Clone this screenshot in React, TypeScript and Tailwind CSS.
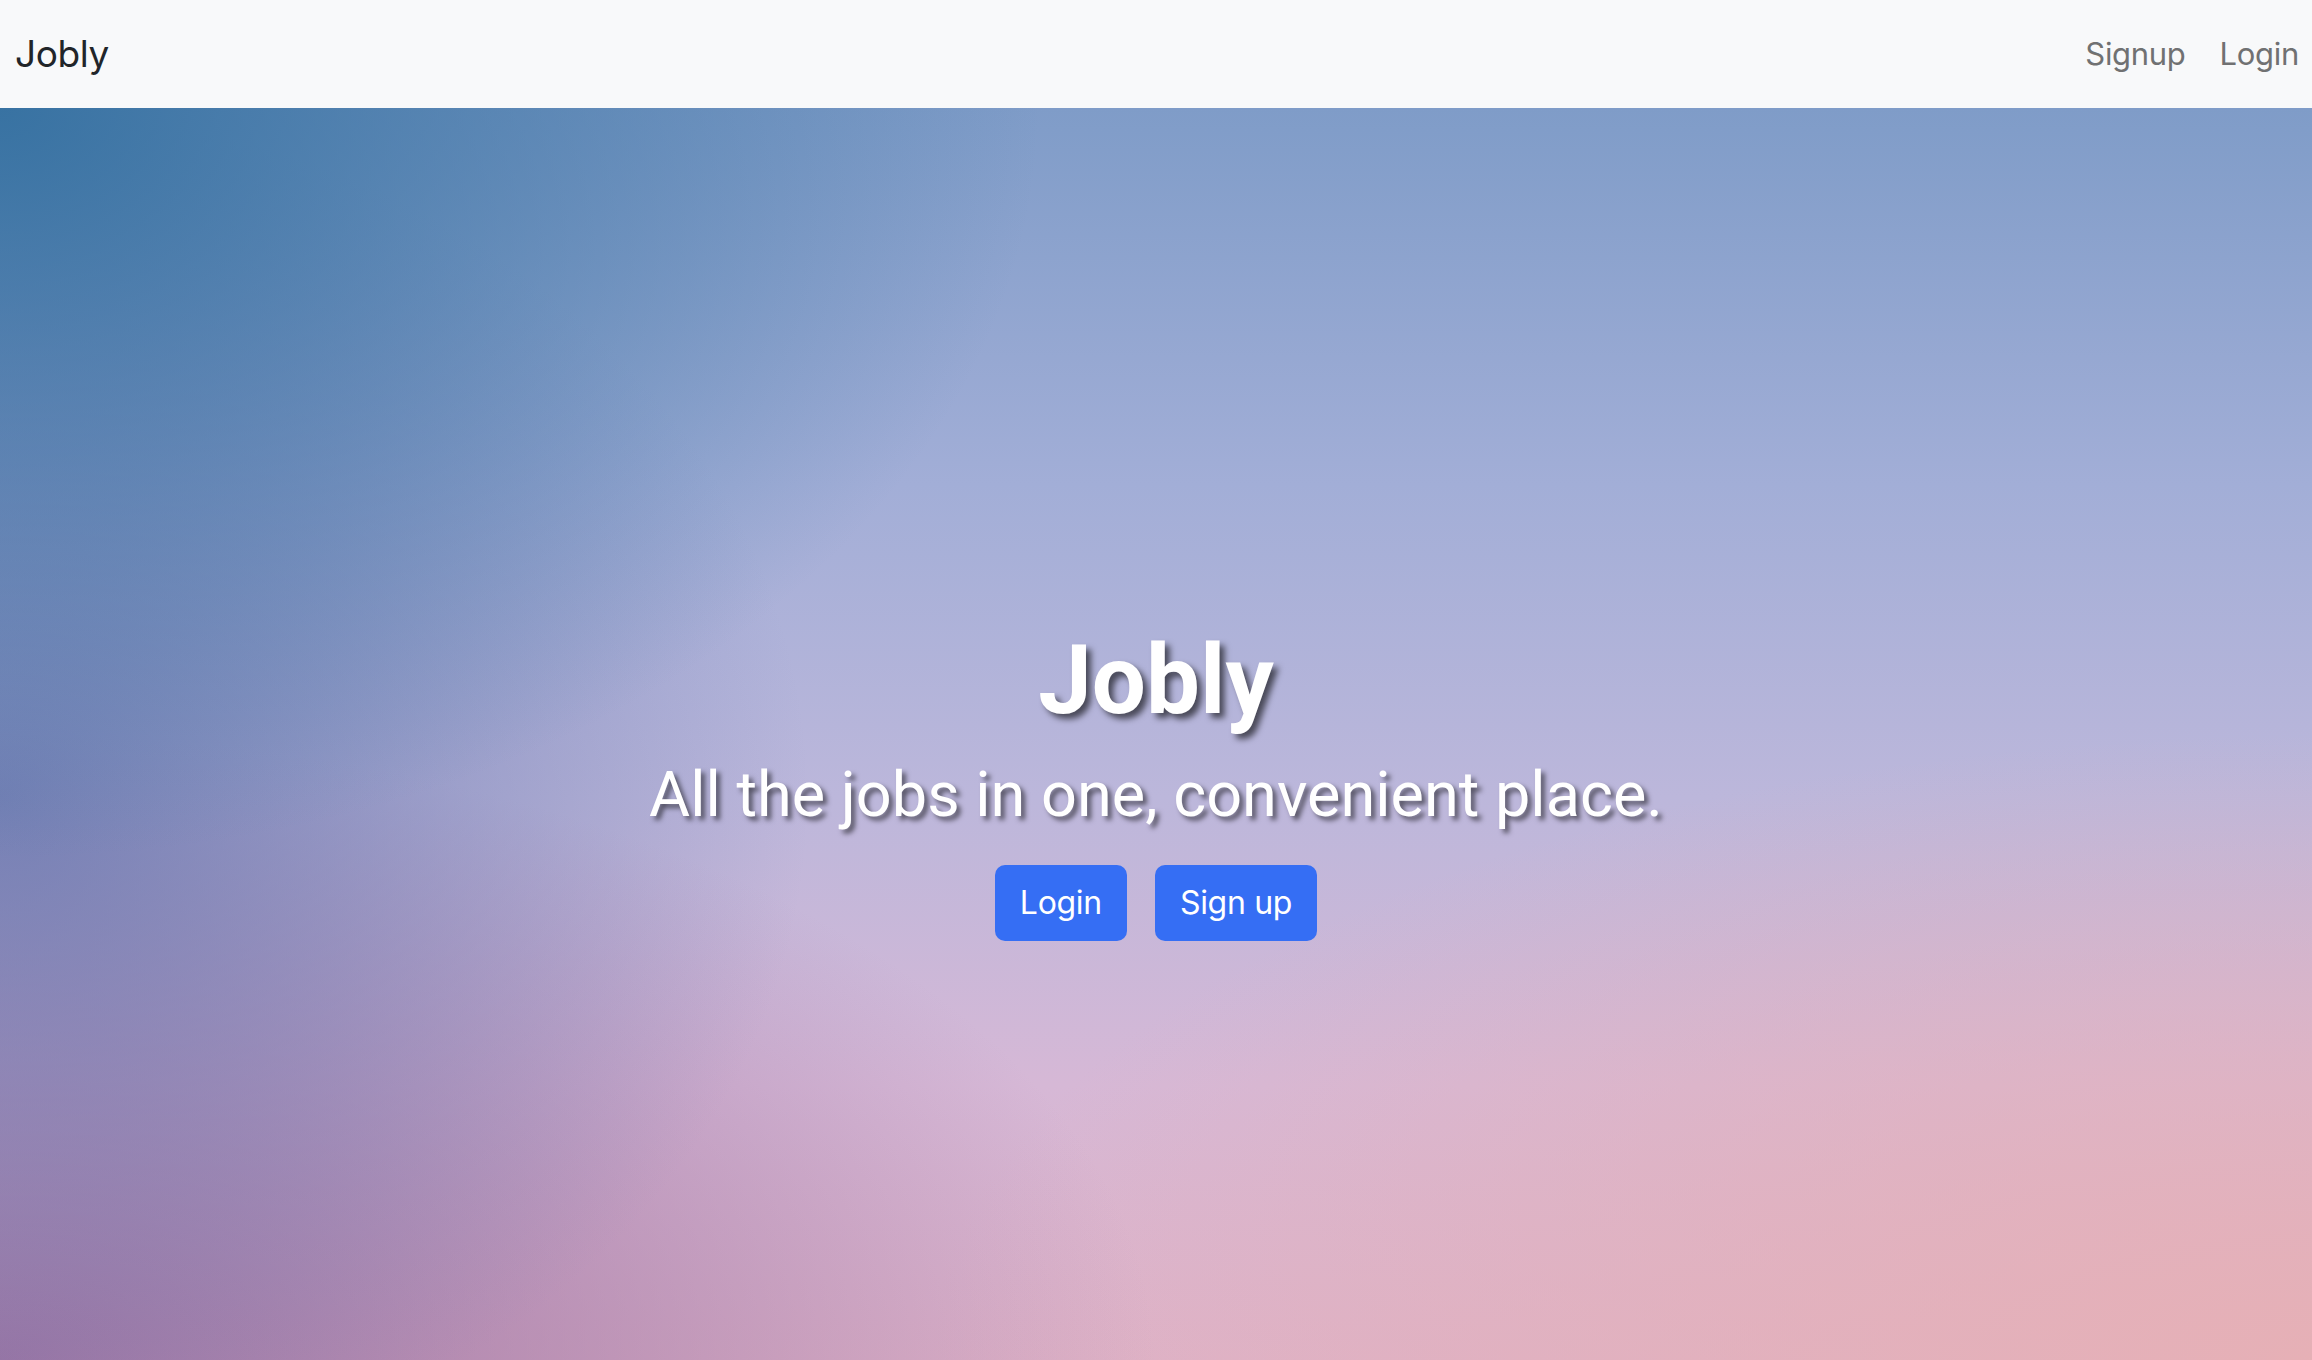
import React from "react";

const NavBar: React.FC = () => {
  return (
    <nav className="flex h-[108px] items-center justify-between bg-[#f8f9fa] pl-[15px] pr-[13px] font-['Inter',sans-serif]">
      <a className="text-[37px] tracking-[-0.4px] text-[#212529]">Jobly</a>
      <div className="flex items-center gap-[34px] text-[31px] tracking-[-0.3px] text-[#707172]">
        <a>Signup</a>
        <a>Login</a>
      </div>
    </nav>
  );
};

const Hero: React.FC = () => {
  return (
    <main className="flex h-[1252px] flex-col items-center bg-[radial-gradient(ellipse_45%_60%_at_0%_0%,rgba(52,112,160,0.95),rgba(52,112,160,0)),radial-gradient(ellipse_35%_55%_at_0%_55%,rgba(105,120,175,0.85),rgba(105,120,175,0)),radial-gradient(ellipse_50%_50%_at_0%_100%,rgba(150,110,160,0.9),rgba(150,110,160,0)),radial-gradient(ellipse_60%_50%_at_100%_100%,rgba(230,176,182,1),rgba(230,176,182,0)),linear-gradient(to_bottom,#7f9cc8_0%,#a2aed7_30%,#bcb7db_55%,#d6b8d6_78%,#ddb2c8_100%)] pt-[515px] font-['Roboto',sans-serif] text-white">
      <h1 className="text-[96px] font-bold leading-[1.2] [text-shadow:5px_5px_6px_rgba(0,0,0,0.6)]">
        Jobly
      </h1>
      <p className="mt-[19px] text-[63px] leading-[1.2] [text-shadow:4px_4px_5px_rgba(0,0,0,0.55)]">
        All the jobs in one, convenient place.
      </p>
      <div className="mt-[32px] flex gap-[28px] font-['Inter',sans-serif]">
        <button className="h-[76px] rounded-[10px] bg-[#356ef4] px-[25px] text-[32px] tracking-[-0.3px] text-white">
          Login
        </button>
        <button className="h-[76px] rounded-[10px] bg-[#356ef4] px-[25px] text-[32px] tracking-[-0.3px] text-white">
          Sign up
        </button>
      </div>
    </main>
  );
};

export default function App() {
  return (
    <div className="h-[1360px] w-full overflow-hidden">
      <NavBar />
      <Hero />
    </div>
  );
}
